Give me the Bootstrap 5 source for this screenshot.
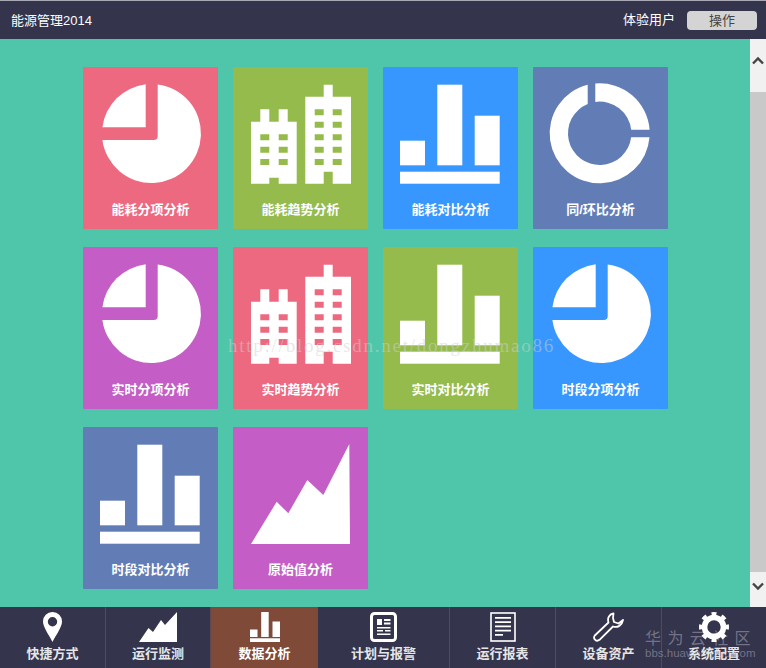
<!DOCTYPE html>
<html lang="zh-CN">
<head>
    <meta charset="UTF-8">
    <meta name="viewport" content="width=device-width, initial-scale=1.0">
    <title>能源管理2014</title>
    <link href="https://cdn.jsdelivr.net/npm/bootstrap@5.3.2/dist/css/bootstrap.min.css" rel="stylesheet">
    <style>
        body {
            font-family: "Liberation Sans", "Noto Sans CJK SC", sans-serif;
            font-size: 13px;
            height: 668px;
            overflow: hidden;
            background: #4fc6a9;
        }
        .app-shell { height: 668px; }
        .top-bar {
            height: 39px;
            background: #35344d;
            border-top: 1px solid #a9aab5;
            color: #fff;
            padding: 0 9px 0 11px;
        }
        .top-title { padding-top: 2px; }
        .top-user { margin-right: 12px; }
        .top-btn {
            width: 70px;
            height: 19px;
            padding: 0;
            font-size: 13px;
            line-height: 19px;
            color: #444;
            background: #d4d4d4;
            border: 0;
            border-radius: 4px;
        }
        .work-area { height: 568px; background: #4fc6a9; }
        .tile-grid {
            grid-template-columns: repeat(4, 135px);
            grid-auto-rows: 162px;
            column-gap: 15px;
            row-gap: 18px;
            padding: 28px 0 0 83px;
        }
        .tile {
            color: #fff;
            font-weight: 700;
            text-align: center;
            border-radius: 1px;
            padding-top: 15px;
        }
        .tile svg { display: block; width: 135px; height: 104px; }
        .tile-label { line-height: 18px; margin-top: 15px; }
        .c-pink { background: #ec697f; }
        .c-green { background: #94bb4c; }
        .c-blue { background: #3797fe; }
        .c-slate { background: #627db5; }
        .c-purple { background: #c45dc5; }
        .scroll-rail { width: 16px; background: #f1f1f1; }
        .scroll-cap { height: 53px; padding-bottom: 10px; }
        .scroll-cap-low { height: 35px; padding-bottom: 6px; }
        .scroll-thumb { background: #c9c9c9; }
        .bottom-bar { height: 61px; background: #35344d; }
        .nav-cell {
            width: 106px;
            color: #e6e6e6;
            font-weight: 700;
            text-align: center;
            padding-top: 5px;
            border-right: 1px solid #5e4750;
        }
        .nav-cell svg { display: block; margin: 0 auto; height: 30px; }
        .nav-cell-label { margin-top: 3px; line-height: 18px; }
        .nav-wide { width: 132px; }
        .nav-second { width: 105px; }
        .nav-active { background: #7f4a37; color: #fff; border-right: 0; width: 107px; }
        .nav-last { border-right: 0; flex: 1; position: relative; z-index: 2; }
        .mark-blog {
            left: 228px;
            top: 335px;
            font-family: "Liberation Serif", serif;
            font-size: 19px;
            letter-spacing: 1.75px;
            line-height: 22px;
            color: rgba(208, 208, 208, .5);
            pointer-events: none;
        }
        .mark-cloud {
            left: 645px;
            top: 629px;
            width: 108px;
            color: rgba(170, 170, 185, .55);
            line-height: 1;
            pointer-events: none;
        }
        .mark-cloud-cn { font-size: 16px; letter-spacing: 6.4px; white-space: nowrap; font-family: "Noto Sans CJK SC", sans-serif; }
        .mark-cloud-en { font-size: 11.500px; margin-top: 3px; white-space: nowrap; }
    </style>
</head>
<body>
    <svg width="0" height="0" class="position-absolute">
        <defs>
            <g id="i-pie">
                <path d="M74.7 2.4A49.5 49.5 0 1 1 19.4 58H70.7Q74.7 58 74.7 54Z"/>
                <path d="M62.7 2.3A49.5 49.5 0 0 0 19.4 45.3H62.7Z"/>
            </g>
            <g id="i-bars">
                <rect x="17" y="58.7" width="25" height="24.6"/>
                <rect x="54.3" y="2.7" width="25" height="80.6"/>
                <rect x="91.7" y="33.7" width="25" height="49.6"/>
                <rect x="17" y="89.7" width="99.7" height="12"/>
            </g>
            <g id="i-donut">
                <path d="M62.3 1.5A50 50 0 0 1 116.6 47.7H98.2A31.7 31.7 0 0 0 62.3 19.9Z"/>
                <path d="M116.5 55.3A50 50 0 1 1 54.7 2.8V22A31.7 31.7 0 1 0 98.15 55.3Z"/>
            </g>
            <path id="i-peak" d="M18 102L43.7 59.7L55.3 71.3L74.3 38L90.3 53L116.3 2L117 102Z"/>
            <path id="i-city" fill-rule="evenodd" d="M18 39.7H27.3V27.3H36.3V39.7H45.7V27.3H54.7V39.7H63.7V101.7H45.7V95.7H36.3V101.7H18Z
                M27.3 52.3V58.3H36.3V52.3Z M45.7 52.3V58.3H54.7V52.3Z
                M27.3 64.7V70.7H36.3V64.7Z M45.7 64.7V70.7H54.7V64.7Z
                M27.3 77V83H36.3V77Z M45.7 77V83H54.7V77Z
                M72.3 14.7H90.7V2.7H99.7V14.7H118V101.7H99.7V89.7H90.7V101.7H72.3Z
                M81.7 27.3V33.3H90.7V27.3Z M99.7 27.3V33.3H108.7V27.3Z
                M81.7 39.7V45.7H90.7V39.7Z M99.7 39.7V45.7H108.7V39.7Z
                M81.7 52.3V58.3H90.7V52.3Z M99.7 52.3V58.3H108.7V52.3Z
                M81.7 64.7V70.7H90.7V64.7Z M99.7 64.7V70.7H108.7V64.7Z
                M81.7 77V83H90.7V77Z M99.7 77V83H108.7V77Z"/>
        </defs>
    </svg>

    <div class="app-shell d-flex flex-column">
        <!-- top bar -->
        <div class="top-bar d-flex align-items-center justify-content-between">
            <span class="top-title">能源管理2014</span>
            <div class="d-flex align-items-center">
                <span class="top-user">体验用户</span>
                <button type="button" class="btn top-btn">操作</button>
            </div>
        </div>

        <!-- tiles + scroll rail -->
        <div class="work-area d-flex">
            <div class="flex-grow-1">
                <div class="tile-grid d-grid" id="tileGrid"></div>
            </div>
            <div class="scroll-rail d-flex flex-column">
                <div class="scroll-cap d-flex align-items-center justify-content-center">
                    <svg width="12" height="9" viewBox="0 0 12 9"><path d="M1 7.500L6 2.500L11 7.500" fill="none" stroke="#444" stroke-width="2.400"/></svg>
                </div>
                <div class="scroll-thumb flex-grow-1"></div>
                <div class="scroll-cap-low d-flex align-items-center justify-content-center">
                    <svg width="12" height="9" viewBox="0 0 12 9"><path d="M1 1.500L6 6.500L11 1.500" fill="none" stroke="#444" stroke-width="2.400"/></svg>
                </div>
            </div>
        </div>

        <!-- bottom nav -->
        <div class="bottom-bar d-flex">
            <div class="nav-cell">
                <svg width="19" height="30" viewBox="0 0 19 30"><path fill="#fff" fill-rule="evenodd" d="M9.500 0A9.400 9.400 0 0 1 19 9.500C19 15 13 23 9.500 30C6 23 0 15 0 9.500A9.400 9.400 0 0 1 9.500 0ZM9.500 5A4.700 4.700 0 1 0 9.500 14.400A4.700 4.700 0 1 0 9.500 5Z"/></svg>
                <div class="nav-cell-label">快捷方式</div>
            </div>
            <div class="nav-cell nav-second">
                <svg width="38" height="30" viewBox="0 0 38 30"><path fill="#fff" d="M0 30L9.500 16L14 20L22 8L26 13L38 0V30Z"/></svg>
                <div class="nav-cell-label">运行监测</div>
            </div>
            <div class="nav-cell nav-active">
                <svg width="30" height="30" viewBox="0 0 30 30"><path fill="#fff" d="M0 17.500H7.500V25H0ZM11.200 0H18.700V25H11.200ZM22.500 9.500H30V25H22.500ZM0 26.300H30V30H0Z"/></svg>
                <div class="nav-cell-label">数据分析</div>
            </div>
            <div class="nav-cell nav-wide">
                <svg width="27" height="30" viewBox="0 0 27 30"><rect x="1.500" y="1.500" width="24" height="27" rx="3" fill="none" stroke="#fff" stroke-width="3"/><path fill="#fff" d="M7 7H12V13H7ZM14 7H20.500V9H14ZM14 10.500H20.500V12.500H14ZM7 15H20.500V16.500H7ZM7 18H13V19.500H7ZM15 18H20.500V19.500H15ZM7 21.500H20.500V23H7Z"/></svg>
                <div class="nav-cell-label">计划与报警</div>
            </div>
            <div class="nav-cell">
                <svg width="26" height="30" viewBox="0 0 26 30"><rect x="1" y="1" width="24" height="28" fill="none" stroke="#fff" stroke-width="1.600"/><path fill="#fff" d="M5 5H21V6.800H5ZM5 9.300H21V11.100H5ZM5 13.500H21V15.300H5ZM5 17.800H21V19.600H5ZM5 22H13V23.800H5Z"/></svg>
                <div class="nav-cell-label">运行报表</div>
            </div>
            <div class="nav-cell">
                <svg width="31" height="30" viewBox="0 0 31 30"><path fill="none" stroke="#fff" stroke-width="1.800" stroke-linejoin="round" d="M20.500 1.500C16.500 2 14 6 15.500 10.500L1.800 23.500C.5 25 1 26.800 2.200 27.800C3.500 29 5 29 6.500 27.800L20 14.500C24.500 16 29 13.500 30 8L25.500 11.500L21 10L20 6Z"/></svg>
                <div class="nav-cell-label">设备资产</div>
            </div>
            <div class="nav-cell nav-last">
                <svg width="30" height="30" viewBox="0 0 30 30"><circle cx="15" cy="15" r="9.500" fill="none" stroke="#fff" stroke-width="5.600"/><circle cx="15" cy="15" r="13.300" fill="none" stroke="#fff" stroke-width="3.400" pathLength="8" stroke-dasharray=".48 .52" stroke-dashoffset=".24"/></svg>
                <div class="nav-cell-label">系统配置</div>
            </div>
        </div>
    </div>

    <!-- watermarks sit on top of the page -->
    <div class="mark-blog position-absolute">http://blog.csdn.net/dongzhumao86</div>
    <div class="mark-cloud position-absolute">
        <div class="mark-cloud-cn">华为云社区</div>
        <div class="mark-cloud-en">bbs.huaweicloud.com</div>
    </div>

    <script src="https://cdn.jsdelivr.net/npm/bootstrap@5.3.2/dist/js/bootstrap.bundle.min.js"></script>
    <script>
        const tiles = [
            ['能耗分项分析', 'c-pink', 'i-pie'],
            ['能耗趋势分析', 'c-green', 'i-city'],
            ['能耗对比分析', 'c-blue', 'i-bars'],
            ['同/环比分析', 'c-slate', 'i-donut'],
            ['实时分项分析', 'c-purple', 'i-pie'],
            ['实时趋势分析', 'c-pink', 'i-city'],
            ['实时对比分析', 'c-green', 'i-bars'],
            ['时段分项分析', 'c-blue', 'i-pie'],
            ['时段对比分析', 'c-slate', 'i-bars'],
            ['原始值分析', 'c-purple', 'i-peak']
        ];

        document.getElementById('tileGrid').innerHTML = tiles.map(t => `
            <div class="tile ${t[1]}">
                <svg viewBox="0 0 135 104" fill="#fff"><use href="#${t[2]}"/></svg>
                <div class="tile-label">${t[0]}</div>
            </div>`).join('');
    </script>
</body>
</html>
